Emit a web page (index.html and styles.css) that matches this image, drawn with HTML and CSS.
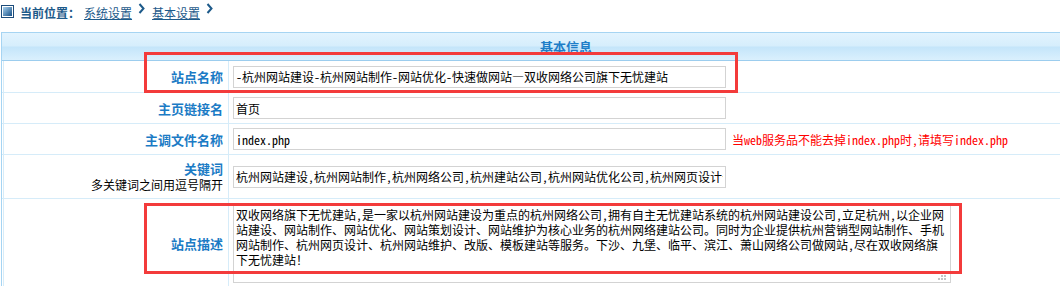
FILE: index.html
```html
<!DOCTYPE html>
<html lang="zh-CN">
<head>
    <meta charset="UTF-8">
    <title>基本设置</title>
    <link rel="stylesheet" href="styles.css">
</head>
<body>
    <div class="page">
        <div class="crumb">
            <svg class="crumb-icon" width="13" height="13" viewBox="0 0 13 13">
                <defs>
                    <linearGradient id="ig" x1="0" y1="0" x2="1" y2="1">
                        <stop offset="0" stop-color="#a9d2ef"/>
                        <stop offset="1" stop-color="#154f86"/>
                    </linearGradient>
                </defs>
                <rect x="0.5" y="0.5" width="12" height="12" fill="#fff" stroke="#1d4c7a"/>
                <rect x="2" y="2" width="9" height="9" fill="url(#ig)"/>
            </svg>
            <span class="crumb-title">当前位置：</span>
            <a class="crumb-link" href="#">系统设置</a>
            <svg class="arrow" width="7" height="11" viewBox="0 0 7 11"><path d="M1.5 1 L5.5 5.5 L1.5 10" fill="none" stroke="#1d5a8a" stroke-width="2"/></svg>
            <a class="crumb-link" href="#">基本设置</a>
            <svg class="arrow" width="7" height="11" viewBox="0 0 7 11"><path d="M1.5 1 L5.5 5.5 L1.5 10" fill="none" stroke="#1d5a8a" stroke-width="2"/></svg>
        </div>

        <table class="form-table">
            <tr>
                <td class="head" colspan="2">基本信息</td>
            </tr>
            <tr class="row-first">
                <td class="label">站点名称</td>
                <td class="field"><input class="text" type="text" value="-杭州网站建设-杭州网站制作-网站优化-快速做网站—双收网络公司旗下无忧建站"></td>
            </tr>
            <tr>
                <td class="label">主页链接名</td>
                <td class="field"><input class="text" type="text" value="首页"></td>
            </tr>
            <tr>
                <td class="label">主调文件名称</td>
                <td class="field"><input class="text" type="text" value="index.php"><span class="note">当web服务品不能去掉index.php时,请填写index.php</span></td>
            </tr>
            <tr class="row-tall">
                <td class="label">关键词<span class="sub">多关键词之间用逗号隔开</span></td>
                <td class="field"><input class="text" type="text" value="杭州网站建设,杭州网站制作,杭州网络公司,杭州建站公司,杭州网站优化公司,杭州网页设计公司"></td>
            </tr>
            <tr class="row-area">
                <td class="label">站点描述</td>
                <td class="field">
                    <div class="area">双收网络旗下无忧建站,是一家以杭州网站建设为重点的杭州网络公司,拥有自主无忧建站系统的杭州网站建设公司,立足杭州,以企业网站建设、网站制作、网站优化、网站策划设计、网站维护为核心业务的杭州网络建站公司。同时为企业提供杭州营销型网站制作、手机网站制作、杭州网页设计、杭州网站维护、改版、模板建站等服务。下沙、九堡、临平、滨江、萧山网络公司做网站,尽在双收网络旗下无忧建站！<svg class="grip" width="9" height="9" viewBox="0 0 9 9"><rect x="6" y="0" width="2" height="2"/><rect x="3" y="3" width="2" height="2"/><rect x="6" y="3" width="2" height="2"/><rect x="0" y="6" width="2" height="2"/><rect x="3" y="6" width="2" height="2"/><rect x="6" y="6" width="2" height="2"/></svg></div>
                </td>
            </tr>
        </table>

        <div class="mark mark-name"></div>
        <div class="mark mark-desc"></div>
    </div>
</body>
</html>
```

FILE: styles.css
```css
body {
    margin: 0;
    font-family: "Noto Sans CJK SC", sans-serif;
    font-size: 12px;
    color: #000;
    background-color: #fff;
    overflow: hidden;
}
.page {
    position: relative;
    height: 286px;
}
.crumb {
    height: 24px;
    padding-left: 1px;
    display: flex;
    align-items: center;
    color: #1d5a8a;
    font-size: 12px;
}
.crumb-icon {
    margin-top: -2px;
    margin-right: 6px;
}
.crumb-title {
    font-weight: bold;
    margin-right: 4px;
}
.crumb-link {
    color: #1d5a8a;
    text-decoration: underline;
}
.arrow {
    align-self: flex-start;
    margin-top: 3px;
    margin-left: 6px;
    margin-right: 7px;
}
.form-table {
    margin-top: 8px;
    margin-left: 1px;
    width: 1130px;
    border-collapse: separate;
    border-spacing: 0;
    border: 1px solid #a6d4f2;
}
.form-table td {
    padding: 0;
    border-bottom: 1px solid #d6ecf9;
}
.head {
    height: 27px;
    text-align: center;
    font-size: 13px;
    font-weight: bold;
    color: #1e7ec8;
    background: linear-gradient(#e2f3fe 0, #d6eefc 13px, #c4e5fa 14px, #daf0fd 100%);
}
.form-table td.head {
    border-bottom: 1px solid #9ccdee;
}
.label {
    width: 221px;
    padding-right: 5px !important;
    text-align: right;
    font-size: 13px;
    font-weight: bold;
    color: #1b7bc5;
    border-right: 1px solid #d6ecf9;
    box-shadow: inset 1px 0 0 #fff, inset 2px 0 0 #d6ecf9;
    height: 30px;
}
.row-first .label {
    height: 31px;
}
.row-tall .label {
    height: 43px;
    line-height: 16px;
}
.sub {
    display: block;
    font-size: 12px;
    font-weight: normal;
    color: #000;
}
.field {
    padding-left: 4px !important;
    white-space: nowrap;
}
.text {
    width: 493px;
    height: 22px;
    box-sizing: border-box;
    margin: 0;
    padding: 0 2px;
    border: 1px solid #d3d3d3;
    font-family: "Noto Sans Mono CJK SC", "Noto Sans CJK SC", sans-serif;
    font-size: 12px;
    color: #000;
    vertical-align: middle;
    outline: none;
}
.note {
    margin-left: 6px;
    color: #f00;
    font-family: "Noto Sans Mono CJK SC", "Noto Sans CJK SC", sans-serif;
    vertical-align: middle;
}
.row-area .field {
    padding-top: 4px !important;
    padding-bottom: 4px !important;
    vertical-align: top;
}
.area {
    position: relative;
    width: 718px;
    height: 80px;
    box-sizing: border-box;
    padding: 3px 2px 2px;
    border: 1px solid #d3d3d3;
    font-family: "Noto Sans Mono CJK SC", "Noto Sans CJK SC", sans-serif;
    font-size: 12px;
    line-height: 15px;
    white-space: normal;
    overflow: hidden;
}
.grip {
    position: absolute;
    right: 3px;
    bottom: 1px;
    fill: #c4c4c4;
}
.mark {
    position: absolute;
    box-sizing: border-box;
    border: 3px solid #f33b3b;
}
.mark-name {
    left: 144px;
    top: 52px;
    width: 594px;
    height: 41px;
}
.mark-desc {
    left: 144px;
    top: 203px;
    width: 818px;
    height: 71px;
}
```
